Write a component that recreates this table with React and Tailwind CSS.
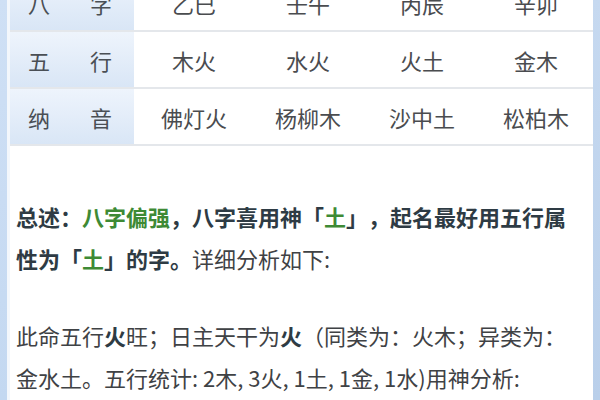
const ROWS = [
  { head: ['八', '字'], cells: ['乙巳', '壬午', '丙辰', '辛卯'] },
  { head: ['五', '行'], cells: ['木火', '水火', '火土', '金木'] },
  { head: ['纳', '音'], cells: ['佛灯火', '杨柳木', '沙中土', '松柏木'] },
];

function Row({ row, first }) {
  return (
    <div
      className={
        'grid grid-cols-[127px_1fr_1fr_1fr_1fr] h-[57px] border-b-2 border-[#e4e7eb] ' +
        (first ? '-mt-[25px]' : '')
      }
    >
      <div className="flex items-center justify-between pl-[18px] pr-[22px] mr-[3px] bg-gradient-to-b from-[#eef4fc] to-[#d9e6f6] text-[#4a4f55]">
        <span>{row.head[0]}</span>
        <span>{row.head[1]}</span>
      </div>
      {row.cells.map((c, i) => (
        <div key={i} className="flex items-center justify-center text-[#4a4c4f]">
          {c}
        </div>
      ))}
    </div>
  );
}

export default function App() {
  return (
    <div className="w-[600px] h-[400px] overflow-hidden bg-white flex font-['Noto_Sans_CJK_SC',sans-serif] [text-spacing-trim:space-all]">
      <div className="w-[7px] shrink-0 bg-gradient-to-b from-[#cfe0f5] to-[#c3d8f1]" />
      <div className="w-[3px] shrink-0 bg-[#f3f7fc]" />

      <div className="flex-1 flex flex-col">
        <div className="text-[22px] leading-none">
          {ROWS.map((r, i) => (
            <Row key={i} row={r} first={i === 0} />
          ))}
        </div>

        <div className="pl-[6px] w-[566px] text-[22px] leading-[42px] text-[#3f4245]">
          <p className="mt-[49px]">
            <b className="text-[#2e3b44]">总述：</b>
            <b className="text-[#3e8a35]">八字偏强</b>
            <b className="text-[#2e3b44]">，八字喜用神「</b>
            <b className="text-[#3e8a35]">土</b>
            <b className="text-[#2e3b44]">」，起名最好用五行属性为「</b>
            <b className="text-[#3e8a35]">土</b>
            <b className="text-[#2e3b44]">」的字。</b>
            详细分析如下:
          </p>
          <p className="mt-[35px]">
            此命五行<b className="text-[#2e3b44]">火</b>旺；日主天干为<b className="text-[#2e3b44]">火</b>（同类为：火木；异类为：金水土。五行统计: 2木, 3火, 1土, 1金, 1水)用神分析:
          </p>
        </div>
      </div>

      <div className="w-[7px] shrink-0 bg-gradient-to-b from-[#c6d9f0] to-[#b9cfea]" />
    </div>
  );
}
